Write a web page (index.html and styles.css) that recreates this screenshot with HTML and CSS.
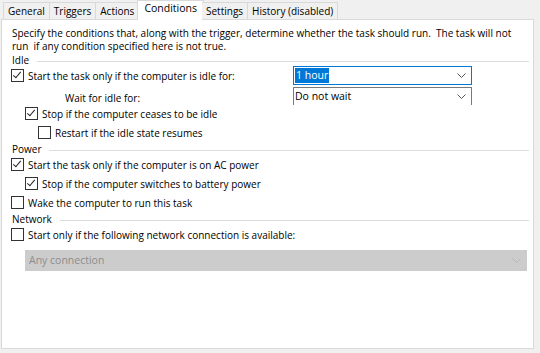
FILE: index.html
```html
<!DOCTYPE html>
<html lang="en">
<head>
    <meta charset="UTF-8">
    <title>Task Properties - Conditions</title>
    <link rel="stylesheet" href="styles.css">
</head>
<body>
    <div class="tabs">
        <div class="tab">General</div>
        <div class="tab">Triggers</div>
        <div class="tab">Actions</div>
        <div class="tab active">Conditions</div>
        <div class="tab">Settings</div>
        <div class="tab">History (disabled)</div>
    </div>

    <div class="panel">
        <p class="intro">Specify the conditions that, along with the trigger, determine whether the task should run.&nbsp; The task will not<br>run&nbsp; if any condition specified here is not true.</p>

        <div class="group-title">Idle</div>
        <div class="field-row">
            <label class="check"><span class="box checked"></span>Start the task only if the computer is idle for:</label>
            <div class="combo focused"><span class="value selected">1 hour</span><svg class="arrow" width="9" height="5" viewBox="0 0 9 5"><path d="M0.5 0.5L4.5 4.5L8.5 0.5" fill="none" stroke="#555" stroke-width="1"/></svg></div>
        </div>
        <div class="field-row wait">
            <span class="plain indent-3">Wait for idle for:</span>
            <div class="combo clipped"><span class="value">Do not wait</span><svg class="arrow" width="9" height="5" viewBox="0 0 9 5"><path d="M0.5 0.5L4.5 4.5L8.5 0.5" fill="none" stroke="#555" stroke-width="1"/></svg></div>
        </div>
        <label class="check indent-1"><span class="box checked"></span>Stop if the computer ceases to be idle</label>
        <label class="check indent-2"><span class="box"></span>Restart if the idle state resumes</label>

        <div class="group-title">Power</div>
        <label class="check"><span class="box checked"></span>Start the task only if the computer is on AC power</label>
        <label class="check indent-1"><span class="box checked"></span>Stop if the computer switches to battery power</label>
        <label class="check"><span class="box"></span>Wake the computer to run this task</label>

        <div class="group-title">Network</div>
        <label class="check"><span class="box"></span>Start only if the following network connection is available:</label>
        <div class="combo disabled"><span class="value">Any connection</span><svg class="arrow" width="9" height="5" viewBox="0 0 9 5"><path d="M0.5 0.5L4.5 4.5L8.5 0.5" fill="none" stroke="#b8b8b8" stroke-width="1"/></svg></div>
    </div>
</body>
</html>
```

FILE: styles.css
```css
body {
    margin: 0;
    background: #f0f0f0;
    font-family: "Open Sans", "Noto Sans", sans-serif;
    font-size: 10px;
    color: #000;
    width: 540px;
    height: 353px;
    overflow: hidden;
}

.tabs {
    display: flex;
    padding: 2px 0 0 3px;
    height: 17px;
    position: relative;
    z-index: 1;
}

.tab {
    height: 16px;
    line-height: 17px;
    padding: 0 4px;
    border: 1px solid #d9d9d9;
    border-left: none;
    background: #f0f0f0;
}

.tab:first-child {
    border-left: 1px solid #d9d9d9;
}

.tab.active {
    background: #fff;
    margin: -2px -2px 0 -2px;
    padding: 0 6px 3px;
    line-height: 15px;
    font-size: 10.5px;
    border-left: 1px solid #d9d9d9;
    border-bottom: none;
}

.panel {
    background: #fff;
    border: 1px solid #d9d9d9;
    margin: 0 6px 0 1px;
    height: 328px;
    padding: 0 0 0 9px;
}

.intro {
    margin: 7px 0 0 1px;
    line-height: 13px;
    white-space: nowrap;
}

.group-title {
    display: flex;
    align-items: center;
    margin: 2px 4px 0 1px;
    height: 11px;
    line-height: 11px;
}

.group-title::after {
    content: "";
    flex: 1;
    border-top: 1px solid #dcdcdc;
    margin-left: 8px;
    margin-top: 2px;
}

.check {
    display: flex;
    align-items: center;
    height: 19px;
}

.plain {
    display: flex;
    align-items: center;
    height: 19px;
}

.indent-1 { padding-left: 14px; }
.indent-2 { padding-left: 27px; }
.indent-3 { padding-left: 54px; }

.box {
    width: 11px;
    height: 11px;
    border: 1px solid #333;
    background: #fff;
    margin-right: 4px;
    flex: none;
    position: relative;
}

.box.checked::after {
    content: "";
    position: absolute;
    left: 3px;
    top: 0px;
    width: 3px;
    height: 7px;
    border: solid #222;
    border-width: 0 1px 1px 0;
    transform: rotate(40deg);
}

.field-row {
    display: grid;
    grid-template-columns: 282px 179px;
    grid-template-rows: 19px;
    align-items: center;
}

.field-row.wait {
    align-items: start;
}

.field-row.wait .plain {
    margin-top: 3px;
}

.combo {
    display: flex;
    align-items: center;
    height: 17px;
    border: 1px solid #7a7a7a;
    padding: 0 0 0 1px;
    background: #fff;
}

.combo.focused {
    border-color: #0078d7;
}

.combo.clipped {
    border-bottom: none;
    margin-top: 2px;
}

.value {
    flex: 1;
    line-height: 15px;
    font-size: 10.5px;
}

.value.selected {
    flex: none;
    background: #0078d7;
    color: #fff;
    padding: 0 1px;
}

.arrow {
    margin-left: auto;
    margin-right: 5px;
    flex: none;
}

.combo.disabled {
    margin: 6px 6px 0 14px;
    height: 19px;
    border-color: #cccccc;
    background: #cccccc;
    color: #8d8d8d;
    padding-left: 3px;
}
```
